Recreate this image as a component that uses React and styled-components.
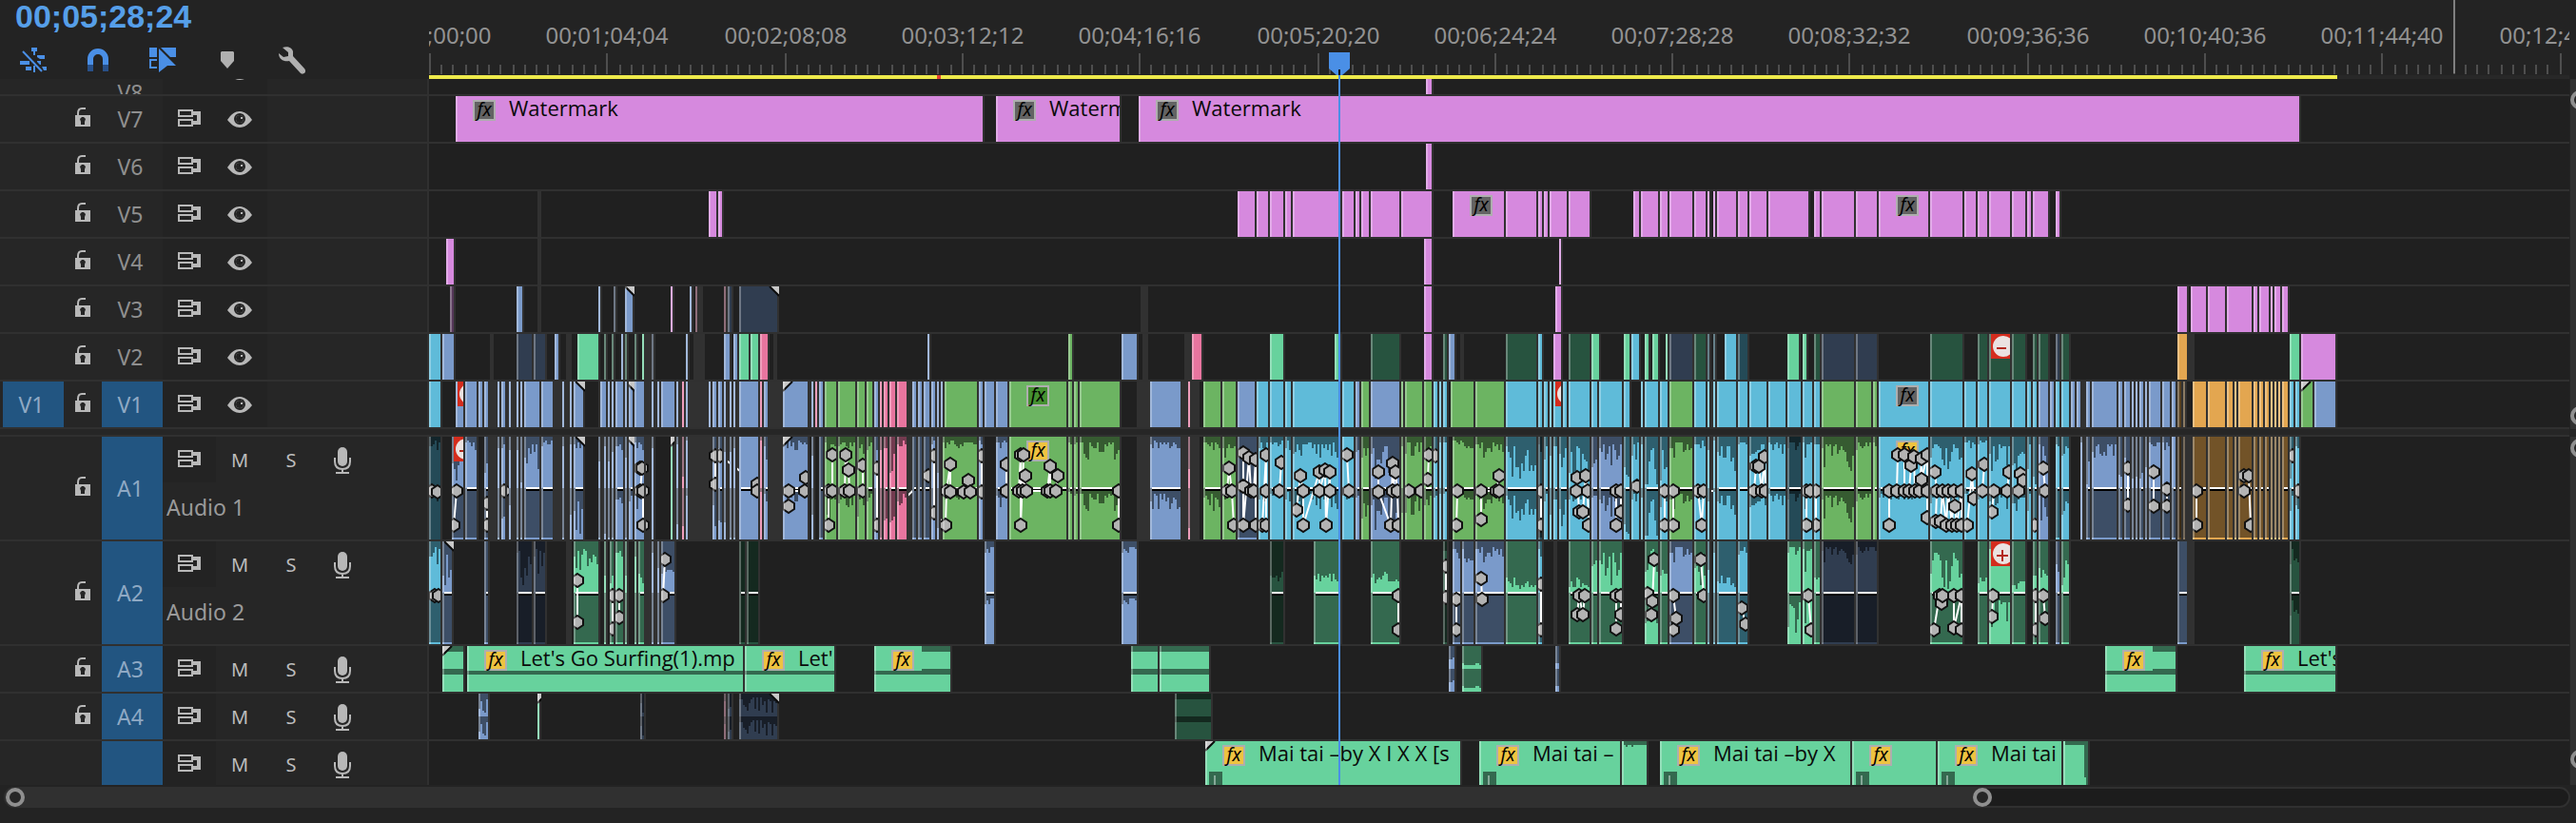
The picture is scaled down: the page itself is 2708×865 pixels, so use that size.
import React from "react";
import styled, { createGlobalStyle, css } from "styled-components";

/* One timeline cell is two pixels wide at this zoom level. */
const CELL = 2;

const GlobalStyle = createGlobalStyle`
  * { box-sizing: border-box; }
  html, body { margin: 0; background: #232323; }
  body {
    font-family: "Noto Sans", "Open Sans", sans-serif;
    color: #8f8f8f;
    overflow: hidden;
  }
  button {
    margin: 0;
    padding: 0;
    border: 0;
    background: none;
    color: inherit;
    font: inherit;
    display: flex;
    align-items: center;
    justify-content: center;
  }
  svg { display: block; }
`;

/* body colour, waveform shade */
const COLORS = {
  b: ["#7a9aca", "#3d4e66"],
  c: ["#5fbbd9", "#2e5f6e"],
  g: ["#6cb462", "#365b31"],
  m: ["#67d29d", "#34694f"],
  p: ["#e8759f", "#743b50"],
  o: ["#e3a650", "#725328"],
  v: ["#d689de", "#6b456f"],
  B: ["#303d50", "#181e28"],
  C: ["#244a57", "#12252b"],
  M: ["#27533f", "#14291f"],
  O: ["#5a4220", "#3c2c16"],
  V: ["#553759", "#2c1c2f"],
  P: ["#5d2f40", "#301821"],
  k: ["#313131", "#313131"],
};

/* start-end, colour, waveform levels, marks: fx / transition / badge */
const TRACKS = [
  { id: "V8", kind: "video", height: 16, peek: true, clips: "524-527v" },
  {
    id: "V7", kind: "video", height: 48,
    clips: "14-291v/f 298-363v/f 373-983v/f",
    labels: { 14: "Watermark", 298: "Watermark", 373: "Watermark" },
  },
  { id: "V6", kind: "video", height: 48, clips: "524-527v" },
  {
    id: "V5", kind: "video", height: 48,
    clips: "57-58k 147-151v 152-154v 425-434v 435-441v 442-449v 450-453v 454-479v 480-486v 487-489v 490-494v 495-510v 511-527v 538-565v/f 566-582v 583-585v 586-588v 589-598v 599-610v 633-636v 637-646v 647-651v 652-664v 665-671v 672-673v 675-676v 677-687v 688-693v 694-703v 704-725v 728-731v 732-749v 750-761v 762-788v/f 789-806v 807-813v 814-819v 820-831v 832-839v 840-842v 843-851v 855-857v",
  },
  { id: "V4", kind: "video", height: 48, clips: "9-13v 57-58k 523-527v 594-595v" },
  {
    id: "V3", kind: "video", height: 48,
    clips: "11-13V 46-49b 57-58k 89-90b 97-98B 103-107b/R 127-128v 137-138b 140-141P 141-143k 155-156P 157-159B 163-183B/R 374-377k 523-527v 592-595v 919-924v 926-934v 935-944v 945-958v 959-961v 962-967v 968-969v 970-973v 974-977v",
  },
  {
    id: "V2", kind: "video", height: 48,
    clips: "0-6c 7-13b 32-33k 46-54B 55-61B 66-68b 72-74k 78-89m 92-93M 96-97M 101-102b 103-104M 108-109M 112-113m 113-117k 117-118B 135-136b 139-144k 155-158b 160-162b 163-168m 169-173m 174-178p 181-182k 262-263b 336-338g 364-372b 375-377k 397-401k 401-406p 442-449m 476-479m 495-510M 523-527v 533-535M 536-539b 542-543k 566-582M 583-585c 591-595v 599-610M 611-615m 628-631m 632-636c 639-641m 643-646m 650-651m 652-664B 665-671M 672-673C 675-676C 681-687c 688-693C 714-720m 722-724m 728-731M 732-749B 750-761B 789-806M 814-819M 820-831M/- 832-839M 843-845M 846-851M 855-857B 858-862M 919-924o 924-927k 978-983m 984-1002v",
  },
  {
    id: "V1", kind: "video", height: 48, active: true, source: true,
    clips: "15-81k 89-363k 372-404k 582-631k 637-923k 927-983k 0-6c 14-18b/- 19-25b 26-28b 29-31b 36-37b 38-40b 42-43b 46-47b 48-49b 50-58b 59-65b 70-71b 74-75b 76-81b/R 90-93b 94-95b 96-97b 98-102b 103-104b 105-107b/R 108-113b 117-118b 120-121b 122-129b 130-131b 133-134p 135-136b 147-148b 149-151b 152-154b 155-156b 158-159b 160-161b 163-173b 174-175p 176-178b 186-199b/L 201-202b 203-204p 205-207b 208-214g 215-224g 225-229g 230-233g 234-236b 237-238p 239-241p 242-245p 246-251p 254-256b 257-259b 260-263b 264-266b 267-268b 269-270b 271-288g 289-291b 292-297b 298-304b 305-335g/f 336-338g 339-341g 342-363g 379-395b 399-400p 407-416g 417-424g 425-434b 435-441c 442-449c 450-453c 454-479c 480-486c 487-489b 490-494g 495-510b 511-512g 513-522g 523-527g 528-530c 531-532c 533-535c 537-549g 550-565g 566-582c 583-585c 586-588c 589-590c 591-595c/- 596-598c 599-610c 611-614c 615-627c 628-631c 637-638c 639-646c 647-651c 652-664g 665-671c 672-673c 675-676c 677-687c 688-693c 694-703c 704-713c 714-721c 722-727c 728-731c 732-749g 750-758g 759-761g 762-788c/f 789-806c 807-813c 814-819c 820-831c 832-839c 840-842c 843-845c 846-851b 852-854b 855-857c 858-862c 863-865b 866-868b 871-873b 874-887b 888-890b 891-894b 895-896b 897-898b 899-901b 902-903b 904-910b 911-915b 916-918b 919-921O 922-923O 927-934o 935-944o 945-948o 949-950o 951-958o 959-961o 962-964o 965-967o 968-969o 970-971o 972-973o 974-977o 978-980c 981-983c 984-990g/L 991-1002b",
    fxColors: { 305: "#459030" },
  },
  {
    id: "A1", kind: "audio", height: 108, active: true, name: "Audio 1",
    clips: "31-76k 89-117k 129-186k 233-289k 372-379k 395-404k 582-760k 868-919k 924-926k 12-18b.49/+ 0-6C.11 19-25b.19 29-31b.69 36-37b.39 38-40b.26 42-43b.34 46-47b.59 48-49b.89 50-58b.39 59-65b.19 70-71b.29 74-75b.15 76-81b.15/R 89-90b.39 92-93b.18 94-95b.39 96-97b.59 98-102b.34 103-104b.29 105-107b.13/R 108-113b.12 117-118b.10 127-128m.00/L 130-131b.38 133-134p.74 135-136b.13 149-151b.45 152-154b.47 155-156b.25 158-159b.49 160-161b.29 163-173b.00 174-175p.11 176-178b.21 186-199b.11/L 201-202b.23 205-207b.99 208-214g.23 215-224g.12 225-229g.33 230-233g.11 234-236b.48 237-238p.49 239-241p.57 242-245p.56 246-251p.12 254-256b.99 257-259b.99 260-263b.99 264-266b.15 267-268b.78 270-288g.11 289-291b.12 298-304b.12 305-335g.00/f 336-338g.21 339-341g.22 342-363g.22 379-395b.12 399-400p.45 407-416g.12 417-424g.21 425-435b.99 436-441c.11 442-449c.11 450-453c.11 454-479c.22 480-486c.01 487-489b.42 490-494g.23 495-510b.44 511-512g.13 513-522g.23 523-527g.32 528-530c.21 531-532c.21 533-535c.21 538-549g.11 550-565g.22 566-582c.43 583-585C.39 586-588c.42 589-590c.23 591-593c.45 594-598c.45 599-610c.41 611-614b.51 615-627b.33 628-631c.78 632-636c.21 637-638c.34 639-646c.55 647-651c.52 652-664g.22 665-671c.11 672-673c.44 675-676c.11 677-687c.43 688-693c.10 694-703c.33 704-713c.22 714-721C.11 722-727c.22 728-731c.10 732-749g.33 750-758g.11 759-761g.10 762-788c.01/f 789-806c.32 807-813c.11 814-819c.12 820-831c.32 832-839c.42 840-842c.32 843-845c.54 846-851b.33 855-857c.19 858-862c.23 868-869b.10 871-873b.59 874-887b.29 888-890b.79 891-894b.49 895-896b.89 897-898b.89 899-901b.89 902-903b.69 904-910b.19 911-915b.19 916-918b.09 919-921O.99 922-923O.99 927-934o.xx 935-944o.xx 945-948o.xx 949-950o.xx 951-958o.xx 959-961o.xx 962-964o.xx 965-967o.xx 968-969o.xx 970-971o.xx 972-973o.xx 974-977o.xx 978-980c.42 981-983c.12",
    keys: "1.5,57 4.5,58 13,93 14.5,57 30.5,70 30.5,93 39.5,57 111,33 112,33 111,57 112.5,57 112.5,93 150.5,20 150.5,50 153,20 172.5,50 172.5,57 189,73 189,57 197.5,57 198,43 210,93 210,57 212,57 212,19 218.5,57 219,19 220.5,35 221,57 228,30 228,57 235.5,33 235.5,93 262.5,41 265.5,20 265.5,80 271.5,93 272,57 274,29 274,58 281,58 283.5,46 284.5,58 290.5,20 290.5,58 303.5,29 303.5,57 310,57 311,19 311,93 312.5,19 312,57 313.5,41 314,57 325,57 326.5,31 326.5,57 329.5,57 330.5,41 362.5,57 362.5,93 419.5,57 420.5,33 422,57 423,93 428,17 428,52 428,93 431,22 432,57 433.5,57 434.5,24 434.5,93 438,93 440,19 440,57 440,93 447,57 448,27 456,77 458,41 459.5,57 459.5,93 468,37 468,57 471,35 471.5,93 473.5,37 473.5,57 482.5,19 483.5,57 499,37 499,58 505.5,93 506.5,28 506.5,57 508,37 509,57 509.5,93 515,57 521.5,57 525,45 525.5,19 529,20 540,93 540.5,57 553,87 553,57 561,57 562.5,41 562.5,57 584.5,57 584.5,93 603,57 603.5,43 604.5,79 606.5,79 608,41 609,57 609.5,93 624,93 624,57 626.5,57 626.5,79 635,52 649.5,57 649.5,93 654,57 654,93 667,57 669,93 670,57 696.5,57 697.5,31 699,31 700.5,57 702,21 702.5,57 724,93 724,57 726,57 729,57 729,93 767.5,93 767.5,57 771.5,57 772,19 775.5,19 775.5,57 778,57 779,30 780.5,21 781,57 783.5,57 784.5,23 784.5,45 787.5,19 787.5,57 787.5,85 791.5,37 792.5,57 792,89 794.5,89 795.5,57 797.5,93 798.5,57 800.5,93 801.5,57 802,73 803,93 805.5,57 805.5,93 808.5,93 811,39 812,65 816.5,57 817.5,29 821.5,79 822.5,57 829.5,57 830.5,37 835.5,57 836.5,39 838,46 844,93 848.5,33 849.5,57 893,33 893,72 906.5,37 906.5,73 913.5,55 913.5,73 929,57 929,93 954,57 954,41 956.5,41 957.5,93 979.5,20 982.5,57",
  },
  {
    id: "A2", kind: "audio", height: 108, active: true, name: "Audio 2",
    clips: "72-74k 113-122k 924-927k 591-592k 0-6c.2x 7-12b.49/R 29-31b.xx 46-54B.4x 55-61B.3x 76-89m.3x 92-93m.6x 95-97m.7x 98-102m.4x 103-104m.6x 108-109m.5x 110-113m.7x 117-118b.1x 120-121b.4x 122-129b.6x 163-166M.xx 167-173M.xx 292-297b.11 364-372b.11 442-449M.7x 465-479m.7x 495-510m.7x 533-535M.4x 538-542b.39 543-549b.2x 550-565b.2x 566-582m.8x 583-585c.39 599-610m.8x 611-614m.4x 615-627m.5x 639-646m.33 647-651m.6x 652-664b.2x 665-671m.59 672-673c.6x 675-676c.5x 677-687c.8x 688-693c.2x 714-721m.14 722-727m.33 728-731m.7x 732-749B.2x 750-761B.1x 789-806m.5x 814-819m.8x 820-831m.13/+ 832-839m.8x 843-845m.6x 846-851m.6x 855-857b.5x 858-862m.5x 919-924b.xx 978-983M.22",
    keys: "3,57 5,57 78,41 78,85 96.5,57 96.5,92 100,57 100,80 123,57 124,19 509.5,57 509.5,93 534.5,26 534.5,59 540,61 540,93 553,39 553.5,61 584.5,45 584.5,93 603.5,77 604.5,57 606.5,77 607.5,57 624,92 624,57 626.5,57 626.5,77 640.5,55 642.5,77 643,63 644,19 654,57 655.5,81 654,93 668.5,19 670,57 690,70 692,87 725,57 726.5,93 791,93 794,57 795,65 795.5,57 801.5,57 801.5,91 805.5,57 805.5,93 821.5,79 822,57 844.5,57 844.5,93 848.5,57 849.5,81",
  },
  {
    id: "A3", kind: "audio", height: 48, active: true, plain: true,
    clips: "7-18m.t/L 20-165m.s/f 166-213m.s/f 234-274m.h/f 369-383m.t 384-410m.t 536-539b.66 543-553m.88 592-594b.88 881-918m.h/f 954-1002m.s/f",
    labels: { 20: "Let's Go Surfing(1).mp", 166: "Let'", 954: "Let's" },
  },
  {
    id: "A4", kind: "audio", height: 48, active: true, plain: true,
    clips: "26-31b.55 57-58m.00/L 111-113B.55 155-156P.22 157-159B.66 163-183B.44/R 392-411M.t",
  },
  {
    id: "A5", kind: "audio", height: 46, active: true, plain: true, bare: true,
    clips: "408-542m.e/fL 552-626m.e/f 627-640m.r 647-747m.e/f 748-792m.e/f 793-858m.e/f 859-872m.r",
    labels: {
      408: "Mai tai –by X I X X [s",
      552: "Mai tai –",
      647: "Mai tai –by X",
      793: "Mai tai",
    },
  },
];

function parseClips(source) {
  return source.split(" ").map((item) => {
    const [, start, end, color, wave, marks] = item.match(
      /^(\d+)-(\d+)(\w)(?:\.(\w+))?(?:\/(.+))?$/
    );
    return { start: +start, end: +end, color, wave: wave || "", marks: marks || "" };
  });
}

function parseKeys(source) {
  return source ? source.split(" ").map((pair) => pair.split(",").map(Number)) : [];
}

/* ---------- icons ---------- */

const NestIcon = () => (
  <svg width="28" height="26" viewBox="0 0 28 26" fill="#4a8fe6">
    <path d="M12 0h6v4h-2v4h-2V4h-2zM18 8h8v4h-5l-3-2zM0 14h10v4H0zM18 14h4v4h-1l-3-3zM6 20h6v4H6zM14 19h2v7h-2zM23 20h5v4h-3z" />
    <path d="M3 4l20 21" stroke="#4a8fe6" strokeWidth="2" />
  </svg>
);
const MagnetIcon = () => (
  <svg width="22" height="24" viewBox="0 0 22 24">
    <path d="M0 17V11a11 11 0 0 1 22 0v6h-6v-6a5 5 0 0 0-10 0v6z" fill="#4a8fe6" />
    <path d="M0 17h6v7H0zM16 17h6v7h-6z" fill="#285089" />
  </svg>
);
const LinkedIcon = () => (
  <svg width="28" height="26" viewBox="0 0 28 26" fill="#4a8fe6">
    <path d="M0 0h8v10H0zM12 0h16v10h-6zM10 1l18 18h-9l-9 7zM0 12h8v2H2v6h6v2H0z" />
  </svg>
);
const MarkerIcon = () => (
  <svg width="14" height="18" viewBox="0 0 14 18" fill="#b0b0b0">
    <path d="M1 0h12l1 1v9l-7 8-7-8V1z" />
  </svg>
);
const WrenchIcon = () => (
  <svg width="28" height="29" viewBox="0 0 28 29">
    <path d="M4 1C9-1 14 1 15 5v5l12 13c3 4-1 7-4 5L11 15C6 16 0 14 0 7l5 4 5-1V6z" fill="#b0b0b0" />
  </svg>
);
const LockIcon = () => (
  <svg width="16" height="20" viewBox="0 0 16 20">
    <path d="M0 8h16v12H0z" fill="#b8b8b8" />
    <path d="M3 9V6c0-3 1-5 4-5h4" fill="none" stroke="#b8b8b8" strokeWidth="2" />
    <path d="M5 12l2-2h2l2 2-1 3v3H6v-3z" fill="#252525" />
  </svg>
);
const SyncIcon = () => (
  <svg width="24" height="18" viewBox="0 0 24 18">
    <path d="M1 1h14v6H1zM1 11h14v6H1z" fill="none" stroke="#b8b8b8" strokeWidth="2" />
    <path d="M15 2h9v14h-9v-4h5V6h-5z" fill="#b8b8b8" />
  </svg>
);
const EyeIcon = () => (
  <svg width="26" height="17" viewBox="0 0 26 17">
    <path d="M0 9C4 3 8 0 13 0s9 3 13 9c-4 5-8 8-13 8S4 14 0 9z" fill="#b8b8b8" />
    <circle cx="13" cy="8" r="5" fill="#b8b8b8" stroke="#232323" strokeWidth="2" />
    <circle cx="13" cy="8" r="4" fill="#232323" />
    <path d="M14 6h2v2h-2z" fill="#b8b8b8" />
  </svg>
);
const MicIcon = () => (
  <svg width="18" height="28" viewBox="0 0 18 28">
    <rect x="4" y="0" width="10" height="20" rx="5" fill="#b8b8b8" />
    <path d="M1 11v4c0 5 3 8 8 8s8-3 8-8v-4M9 23v4M2 27h14" fill="none" stroke="#b8b8b8" strokeWidth="2" />
  </svg>
);

/* ---------- track headers ---------- */

const Page = styled.main`
  display: flex;
  flex-direction: column;
  width: 100%;
`;
const Workspace = styled.div`
  display: flex;
`;
const HeaderColumn = styled.section`
  flex: none;
  width: 451px;
`;
const ToolPanel = styled.header`
  height: 83px;
  overflow: hidden;
`;
const Timecode = styled.div`
  padding-left: 16px;
  height: 48px;
  font: bold 34px/34px "Liberation Sans", Arial, sans-serif;
  color: #569fe9;
`;
const ToolBar = styled.div`
  display: flex;
  gap: 40px;
  height: 32px;
  padding-left: 21px;
`;
const Tool = styled.button`
  width: 28px;
  height: 30px;
`;
const HeaderRow = styled.div`
  display: flex;
  align-items: ${(p) => (p.$peek ? "flex-end" : "stretch")};
  height: ${(p) => p.$height + (p.$bare ? 0 : 2)}px;
  overflow: hidden;
  padding-left: 3px;
  background: #262626;
  border-bottom: ${(p) => (p.$bare ? 0 : 2)}px solid #303030;
  border-right: 2px solid #303030;
`;
const TrackTag = styled.button`
  flex: none;
  width: 64px;
  padding-right: 4px;
  font-size: 23px;
  line-height: 24px;
  color: ${(p) => (p.$on ? "#8fa9c4" : "#8f8f8f")};
  background: ${(p) => (p.$on ? "#225581" : "transparent")};
`;
const PeekTag = styled(TrackTag)`
  height: 14px;
  align-items: flex-start;
  overflow: hidden;
`;
const LockButton = styled.button`
  flex: none;
  width: 40px;
  padding-bottom: 4px;
`;
const Controls = styled.div`
  flex: 1;
`;
const ControlLine = styled.div`
  display: flex;
  height: 48px;
`;
const SyncButton = styled.button`
  flex: none;
  width: 56px;
  padding-bottom: 2px;
  background: #232323;
`;
const EyeButton = styled.button`
  flex: none;
  width: 54px;
  padding-right: 4px;
  background: #232323;
`;
const MixButton = styled.button`
  flex: none;
  width: 54px;
  padding: 2px 4px 0 0;
  font-size: 20px;
  line-height: 20px;
  color: #bcbcbc;
`;
const TrackName = styled.div`
  padding: 8px 0 0 4px;
  font-size: 23px;
  line-height: 36px;
  color: #9a9a9a;
`;
const Splitter = styled.div`
  height: 8px;
  background: #262626;
  border-bottom: 2px solid #303030;
`;

function TrackHeader({ track }) {
  const { id, kind, height, active, source, name, bare, peek } = track;
  const Tag = peek ? PeekTag : TrackTag;
  return (
    <HeaderRow $height={height} $bare={bare} $peek={peek}>
      <Tag as={source ? "button" : "span"} $on={source}>{source ? "V1" : ""}</Tag>
      <LockButton aria-label={`Lock ${id}`}>{bare || peek ? null : <LockIcon />}</LockButton>
      <Tag $on={active} aria-label={id}>{bare ? "" : id}</Tag>
      <Controls>
        <ControlLine>
          <SyncButton aria-label={`Sync lock ${id}`}><SyncIcon /></SyncButton>
          {kind === "video" ? (
            <EyeButton aria-label={`Toggle output ${id}`}><EyeIcon /></EyeButton>
          ) : (
            <>
              <MixButton aria-label={`Mute ${id}`}>M</MixButton>
              <MixButton aria-label={`Solo ${id}`}>S</MixButton>
              <MixButton aria-label={`Record ${id}`}><MicIcon /></MixButton>
            </>
          )}
        </ControlLine>
        {name && <TrackName>{name}</TrackName>}
      </Controls>
    </HeaderRow>
  );
}

/* ---------- ruler ---------- */

const TimelineColumn = styled.section`
  position: relative;
  flex: 1;
  min-width: 0;
  overflow: hidden;
`;
const Ruler = styled.div`
  position: relative;
  height: 83px;
  overflow: hidden;
  background: #232323;
`;
const RulerLabel = styled.span`
  position: absolute;
  top: 22px;
  width: 160px;
  margin-left: -79px;
  text-align: center;
  font-size: 24px;
  line-height: 30px;
  color: #929292;
`;
const TickMarks = styled.svg`
  position: absolute;
  top: 56px;
  left: 0;
`;
const RenderBar = styled.div`
  position: absolute;
  top: 79px;
  left: 0;
  right: 0;
  height: 4px;
  background: #282828;
`;
const RenderSpan = styled.div`
  position: absolute;
  top: 0;
  height: 4px;
  background: ${(p) => (p.$pending ? "#e5432f" : "#eeea4b")};
`;
const EndLine = styled.div`
  position: absolute;
  top: 0;
  left: 2128px;
  width: 2px;
  height: 77px;
  background: #7f7f7f;
`;
const Playhead = styled.div`
  position: absolute;
  top: 55px;
  bottom: 0;
  left: 946px;
  width: 22px;
`;
const PlayheadLine = styled.div`
  width: 2px;
  height: 100%;
  margin: 0 auto;
  background: #4a8fe6;
`;
const PlayheadCap = styled.svg`
  position: absolute;
  top: 0;
  left: 0;
`;

const RULER_TIMES = [
  "00;00;00;00", "00;01;04;04", "00;02;08;08", "00;03;12;12", "00;04;16;16",
  "00;05;20;20", "00;06;24;24", "00;07;28;28", "00;08;32;32", "00;09;36;36",
  "00;10;40;36", "00;11;44;40", "00;12;48;44",
];
const tickAt = (index) => CELL * Math.round(index * 6.22);

function TimeRuler() {
  const ticks = Array.from({ length: 181 }, (_, i) => {
    const long = i % 15 === 0;
    return `M${tickAt(i)} ${long ? 0 : 12}h2V22h-2z`;
  }).join("");
  return (
    <Ruler>
      {RULER_TIMES.map((time, i) => (
        <RulerLabel key={time} style={{ left: tickAt(i * 15) }}>{time}</RulerLabel>
      ))}
      <TickMarks width="2250" height="22"><path d={ticks} fill="#4e4e4e" /></TickMarks>
      <RenderBar>
        <RenderSpan style={{ left: 0, width: 1003 * CELL }} />
        <RenderSpan $pending style={{ left: 267 * CELL, width: 2 * CELL }} />
      </RenderBar>
      <EndLine />
    </Ruler>
  );
}

/* ---------- clips ---------- */

const Lane = styled.div`
  position: relative;
  height: ${(p) => p.$height + (p.$bare ? 0 : 2)}px;
  overflow: hidden;
  background: #202020;
  border-bottom: ${(p) => (p.$bare ? 0 : 2)}px solid #303030;
`;
const ClipBox = styled.div`
  position: absolute;
  top: 0;
  bottom: 0;
  background: ${(p) => p.$fill};
  box-shadow: 2px 0 0 #313131;
`;
const ClipBody = styled.div`
  position: absolute;
  inset: 0;
  overflow: hidden;
  ${(p) => p.$edge && css`
    &::before {
      content: "";
      position: absolute;
      z-index: 1;
      inset: 0 auto 0 0;
      width: 2px;
      background: rgba(255, 255, 255, 0.3);
    }
  `}
`;
const Drawing = styled.svg`
  position: absolute;
  top: 0;
  left: 0;
`;
const ClipTitle = styled.div`
  position: absolute;
  top: 4px;
  left: 18px;
  display: flex;
  gap: 14px;
  white-space: nowrap;
`;
const FxBadge = styled.span`
  flex: none;
  width: 24px;
  height: 22px;
  border: 2px solid #aeaeae;
  background: ${(p) => p.$fill};
  font-size: 19px;
  font-style: italic;
  line-height: 17px;
  text-align: center;
  color: #000;
`;
const ClipName = styled.span`
  margin-top: -4px;
  font-family: "Open Sans", "Noto Sans", sans-serif;
  font-size: 22px;
  line-height: 24px;
  color: #0a0a0a;
`;

const noise = (n) => {
  const v = Math.sin(n * 127.1 + 11.7) * 43758.5453;
  return v - Math.floor(v);
};

/* Share of a channel's height that the shaded part takes at one cell. */
function shadeDepth(level, cell, channel) {
  if (level >= 9) return channel - 2;
  const grain = noise(cell);
  const share =
    level <= 5
      ? 0.06 + (level / 10) * (grain * grain * 1.7 + 0.3)
      : (level / 10) * (0.85 + grain * 0.3);
  return Math.min(channel - 4, Math.round((share * channel) / 2) * 2);
}

function wavePath(clip, height) {
  const { start, end, wave } = clip;
  const width = (end - start) * CELL;
  if (wave === "e") return `M4 ${height - 14}h14v14h-14z`;
  if (wave === "r") {
    return start === 859
      ? `M2 0H${width}V${height}h-2v-8h-2V4H2z`
      : `M2 0H${width}V4h-14v2h-2v-2h-4v2h-2v-2H2z`;
  }
  if (wave === "s" || wave === "h" || wave === "t") {
    const half = wave === "h" ? 50 : 0;
    let d = wave === "t" ? `M0 24H${width}v6H0z` : `M0 26H${width}v4H0z`;
    if (wave !== "s") d += `M${half} 0H${width}v6H${half}zM${half} 24H${width}v6H${half}z`;
    return d;
  }
  const channel = height / 2;
  let d = "";
  [0, 1].forEach((side) => {
    const raw = wave[side];
    const level = raw === "x" ? 10 : Number(raw || 0);
    const top = side * channel;
    if (!level) return;
    d += `M0 ${top}`;
    for (let i = start; i < end; i += 1) {
      const depth = level >= 9 && !side ? channel : shadeDepth(level, i, channel);
      d += `V${top + depth}h${CELL}`;
    }
    d += `V${top}z`;
  });
  return d;
}

function AudioDrawing({ clip, height, shade, plain, keys }) {
  const width = (clip.end - clip.start) * CELL;
  const own = keys
    .filter(([u]) => u >= clip.start && u < clip.end)
    .map(([u, y]) => [(u - clip.start) * CELL, y]);
  const showLevel = !plain && width > 2 && clip.color !== "k";
  const levelY = 53;
  return (
    <Drawing width={width} height={height}>
      <path d={wavePath(clip, height)} fill={shade} />
      {clip.wave === "e" && <path d={`M9 ${height - 10}h2v10h-2z`} fill="#86a898" />}
      {showLevel && (
        <>
          <path d={`M2 ${levelY}H${width}v2H2z`} fill="#fff" />
          <path d={`M2 ${levelY + 2}H${width}v2H2z`} fill="#000" />
        </>
      )}
      {own.length > 1 && (
        <polyline points={own.map((k) => k.join(",")).join(" ")} fill="none" stroke="#fff" strokeWidth="2" />
      )}
      {own.map(([x, y], i) => (
        <path
          key={i}
          d={`M${x} ${y - 7}l6 4v6l-6 4-6-4v-6z`}
          fill="#b3b3b3"
          stroke="#111"
          strokeWidth="2"
        />
      ))}
    </Drawing>
  );
}

function Corner({ side, width }) {
  const x = side === "L" ? 0 : width - 8;
  const points = side === "L" ? `${x},0 ${x + 9},0 ${x},9` : `${x},0 ${x + 10},0 ${x + 10},9`;
  const line = side === "L" ? `M${x} 10L${x + 10} 0` : `M${x} 0l10 10`;
  return (
    <Drawing width={width + 2} height="11">
      <polygon points={points} fill="#c8c8c8" />
      <path d={line} stroke="#0c0c0c" strokeWidth="2" />
    </Drawing>
  );
}

function AlertBadge({ sign }) {
  return (
    <Drawing width="28" height="26">
      <path d="M2 0h26v26H2z" fill="#d42c1d" />
      <circle cx="15" cy="13" r="11" fill="#ebe2e1" />
      <path d={sign === "+" ? "M8 15h12M14 9v12" : "M8 15h10"} stroke="#b3291f" strokeWidth="2" />
    </Drawing>
  );
}

function Clip({ clip, track, keys }) {
  const [fill, shade] = COLORS[clip.color];
  const width = (clip.end - clip.start) * CELL;
  const name = track.labels && track.labels[clip.start];
  const audio = track.kind === "audio";
  const { marks } = clip;
  const fxFill =
    (track.fxColors && track.fxColors[clip.start]) || (audio ? "#eec341" : "#636363");
  const title = marks.includes("f") && (
    <ClipTitle>
      <FxBadge $fill={fxFill}>fx</FxBadge>
      {name && <ClipName>{name}</ClipName>}
    </ClipTitle>
  );
  /* Keyframes lie over the badge; plain strips lie under it. */
  const titleBelow = audio && !track.plain;
  return (
    <ClipBox $fill={fill} style={{ left: clip.start * CELL, width }}>
      <ClipBody $edge={clip.color !== "k"}>
        {titleBelow && title}
        {audio && (
          <AudioDrawing clip={clip} height={track.height} shade={shade} plain={track.plain} keys={keys} />
        )}
        {!titleBelow && title}
        {(marks.includes("+") || marks.includes("-")) && (
          <AlertBadge sign={marks.includes("+") ? "+" : "-"} />
        )}
      </ClipBody>
      {marks.includes("L") && <Corner side="L" width={width} />}
      {marks.includes("R") && <Corner side="R" width={width} />}
    </ClipBox>
  );
}

function TrackLane({ track }) {
  const keys = parseKeys(track.keys);
  return (
    <Lane $height={track.height} $bare={track.bare}>
      {parseClips(track.clips).map((clip) => (
        <Clip key={`${clip.start}${clip.color}`} clip={clip} track={track} keys={keys} />
      ))}
    </Lane>
  );
}

/* ---------- scroll bars ---------- */

const RailColumn = styled.div`
  flex: none;
  width: 7px;
  display: flex;
  flex-direction: column;
  gap: 8px;
  padding-top: 83px;
  overflow: hidden;
`;
const Rail = styled.div`
  flex: none;
  display: flex;
  flex-direction: column;
  justify-content: space-between;
  height: ${(p) => p.$height}px;
  width: 24px;
  margin-left: 1px;
  padding: ${(p) => p.$pad};
  background: #303030;
`;
const Knob = styled.button`
  flex: none;
  width: 20px;
  height: 20px;
  border: 4px solid #8f8f8f;
  border-radius: 50%;
  background: #262626;
`;
const BottomBar = styled.footer`
  padding: 2px 6px 16px 4px;
`;
const ScrollRail = styled.div`
  height: 22px;
  border: 2px solid #303030;
  border-radius: 11px;
  background: #1c1c1c;
`;
const ScrollThumb = styled.div`
  display: flex;
  align-items: center;
  justify-content: space-between;
  width: 77.5%;
  height: 18px;
  background: #303030;
  border-radius: 9px;
`;

export default function App() {
  const video = TRACKS.filter((t) => t.kind === "video");
  const audio = TRACKS.filter((t) => t.kind === "audio");
  return (
    <Page>
      <GlobalStyle />
      <Workspace>
        <HeaderColumn>
          <ToolPanel>
            <Timecode>00;05;28;24</Timecode>
            <ToolBar>
              <Tool aria-label="Nest sequences"><NestIcon /></Tool>
              <Tool aria-label="Snap"><MagnetIcon /></Tool>
              <Tool aria-label="Linked selection"><LinkedIcon /></Tool>
              <Tool aria-label="Add marker"><MarkerIcon /></Tool>
              <Tool aria-label="Timeline settings"><WrenchIcon /></Tool>
            </ToolBar>
          </ToolPanel>
          {video.map((t) => <TrackHeader key={t.id} track={t} />)}
          <Splitter />
          {audio.map((t) => <TrackHeader key={t.id} track={t} />)}
        </HeaderColumn>
        <TimelineColumn>
          <TimeRuler />
          {video.map((t) => <TrackLane key={t.id} track={t} />)}
          <Splitter />
          {audio.map((t) => <TrackLane key={t.id} track={t} />)}
          <Playhead>
            <PlayheadLine />
            <PlayheadCap width="22" height="24">
              <path d="M0 0h22v17l-8 7H8l-8-7z" fill="#4a8fe6" />
              <path d="M10 18h2v6h-2z" fill="#0c0c0c" />
            </PlayheadCap>
          </Playhead>
        </TimelineColumn>
        <RailColumn>
          <Rail $height={368} $pad="12px 0 4px">
            <Knob aria-label="Video tracks top" />
            <Knob aria-label="Video tracks bottom" />
          </Rail>
          <Rail $height={366} $pad="2px 0 17px">
            <Knob aria-label="Audio tracks top" />
            <Knob aria-label="Audio tracks bottom" />
          </Rail>
        </RailColumn>
      </Workspace>
      <BottomBar>
        <ScrollRail>
          <ScrollThumb>
            <Knob aria-label="Zoom start" />
            <Knob aria-label="Zoom end" />
          </ScrollThumb>
        </ScrollRail>
      </BottomBar>
    </Page>
  );
}
